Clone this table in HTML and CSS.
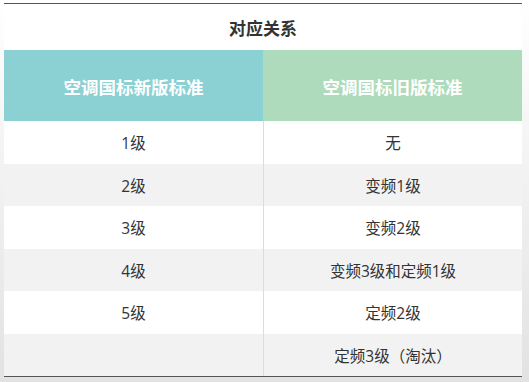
FILE: index.html
```html
<!DOCTYPE html>
<html lang="zh-CN">
<head>
<meta charset="utf-8">
<title>对应关系</title>
<link rel="stylesheet" href="styles.css">
</head>
<body>
<div class="sheet">
  <div class="caption">对应关系</div>
  <div class="grid">
    <div class="head head-new">空调国标新版标准</div>
    <div class="head head-old">空调国标旧版标准</div>

    <div class="cell">1级</div>
    <div class="cell right">无</div>

    <div class="cell alt">2级</div>
    <div class="cell right alt">变频1级</div>

    <div class="cell">3级</div>
    <div class="cell right">变频2级</div>

    <div class="cell alt">4级</div>
    <div class="cell right alt">变频3级和定频1级</div>

    <div class="cell">5级</div>
    <div class="cell right">定频2级</div>

    <div class="cell alt"></div>
    <div class="cell right alt">定频3级（淘汰）</div>
  </div>
</div>
</body>
</html>
```

FILE: styles.css
```css
html, body {
  margin: 0;
  padding: 0;
}
body {
  width: 529px;
  height: 382px;
  overflow: hidden;
  background: linear-gradient(to bottom, #ffffff 0px, #f6f6f6 120px, #e2e2e2 382px);
  font-family: "Open Sans", "Noto Sans CJK SC", sans-serif;
  color: #333;
}
.sheet {
  margin: 3px 0 0 4px;
  width: 518px;
  background: #fff;
  border-top: 1px solid #555;
  border-bottom: 1px solid #555;
}
.caption {
  height: 46px;
  display: flex;
  align-items: center;
  justify-content: center;
  font-size: 17px;
  font-weight: bold;
  color: #333;
  padding-top: 1px;
  box-sizing: border-box;
}
.grid {
  display: grid;
  grid-template-columns: 259px 1fr;
  grid-template-rows: 71px 43px 42px 43px 42px 43px 42px;
}
.head {
  display: flex;
  align-items: center;
  justify-content: center;
  color: #fff;
  font-size: 17.5px;
  font-weight: bold;
  padding-top: 2px;
  box-sizing: border-box;
}
.head-new {
  background: #8bd0d3;
}
.head-old {
  background: #addbbc;
}
.cell {
  display: flex;
  align-items: center;
  justify-content: center;
  font-size: 15.5px;
  color: #333;
  background: #fff;
}
.cell.alt {
  background: #f2f2f2;
}
.cell.right {
  border-left: 1px solid #dcdcdc;
}
```
